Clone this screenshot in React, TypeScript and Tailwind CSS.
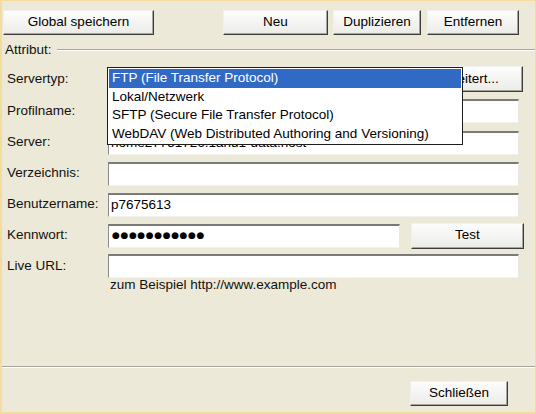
import React from "react";

const font = { fontFamily: '"Liberation Sans", Arial, sans-serif' };

function Btn({ label, className = "" }: { label: string; className?: string }) {
  return (
    <div
      className={`flex items-center justify-center h-[25px] text-[13.5px] text-black bg-gradient-to-b from-[#fdfdfd] to-[#ebebe7] border border-t-[#f0f0ee] border-l-[#f0f0ee] border-r-[#3c3c3c] border-b-[#3c3c3c] shadow-[inset_-1px_-1px_0_#a5a49e] ${className}`}
    >
      {label}
    </div>
  );
}

function Field({ children, className = "w-[411px]" }: { children?: React.ReactNode; className?: string }) {
  return (
    <div
      className={`h-[24px] bg-white border-t-2 border-l border-t-[#7a7a78] border-l-[#8a8a88] border-r border-b border-r-[#e8e8e4] border-b-[#f2f2ee] flex items-center pl-[2px] text-[13.5px] text-black overflow-hidden whitespace-nowrap ${className}`}
    >
      {children}
    </div>
  );
}

function Row({ label, h, children }: { label: string; h: string; children?: React.ReactNode }) {
  return (
    <div className={`flex items-center ${h}`}>
      <div className="w-[106px] pl-[5px] text-[13.5px] text-[#111]">{label}</div>
      {children}
    </div>
  );
}

export default function App() {
  const items = [
    "FTP (File Transfer Protocol)",
    "Lokal/Netzwerk",
    "SFTP (Secure File Transfer Protocol)",
    "WebDAV (Web Distributed Authoring and Versioning)",
  ];

  return (
    <div
      style={font}
      className="relative w-[536px] h-[414px] bg-[#ece9d8] border-l-2 border-t border-b-2 border-r border-[#f4dc9c] flex flex-col overflow-hidden"
    >
      {/* top buttons */}
      <div className="flex pt-[9px] pl-[1px] pr-[16px]">
        <Btn label="Global speichern" className="w-[151px]" />
        <div className="flex-1" />
        <Btn label="Neu" className="w-[105px]" />
        <Btn label="Duplizieren" className="w-[88px] ml-[5px]" />
        <Btn label="Entfernen" className="w-[92px] ml-[6px]" />
      </div>

      {/* group header */}
      <div className="flex items-center mt-[7px] pl-[3px] h-[16px]">
        <span className="text-[13.5px] text-[#111]">Attribut:</span>
        <div className="flex-1 ml-[5px] border-t border-t-[#a7a69c] border-b border-b-white" />
      </div>

      <div className="flex flex-col mt-[5px]">
        <Row label="Servertyp:" h="h-[32px]">
          <Field className="w-[295px]" />
          <Btn label="Erweitert..." className="w-[113px] ml-[7px] h-[26px]" />
        </Row>
        <Row label="Profilname:" h="h-[32px]">
          <Field />
        </Row>
        <Row label="Server:" h="h-[31px]">
          <Field>home27751726.1and1-data.host</Field>
        </Row>
        <Row label="Verzeichnis:" h="h-[31px]">
          <Field />
        </Row>
        <Row label="Benutzername:" h="h-[31px]">
          <Field>p7675613</Field>
        </Row>
        <Row label="Kennwort:" h="h-[31px]">
          <Field className="w-[292px]">
            <span className="text-[9px] tracking-[0.6px] pl-[1px]" style={{ fontFamily: '"DejaVu Sans", sans-serif' }}>
              ●●●●●●●●●●●
            </span>
          </Field>
          <Btn label="Test" className="w-[113px] ml-[11px] h-[26px]" />
        </Row>
        <Row label="Live URL:" h="h-[30px]">
          <Field />
        </Row>
        <div className="pl-[108px] -mt-[6px] text-[13.5px] text-[#111]">zum Beispiel http://www.example.com</div>
      </div>

      <div className="flex-1" />

      {/* bottom separator */}
      <div className="border-t border-t-[#a7a69c] border-b border-b-white" />
      <div className="flex justify-end pr-[27px] pt-[13px] pb-[6px]">
        <Btn label="Schließen" className="w-[98px]" />
      </div>

      {/* open dropdown list */}
      <div className="absolute left-[105px] top-[66px] w-[356px] border border-[#1e1e1e] bg-white p-[1px]">
        {items.map((t, i) => (
          <div
            key={t}
            className={`h-[18.5px] flex items-center pl-[3px] text-[13.5px] ${
              i === 0 ? "bg-[#316ac5] text-white" : "text-black"
            }`}
          >
            {t}
          </div>
        ))}
      </div>
    </div>
  );
}
